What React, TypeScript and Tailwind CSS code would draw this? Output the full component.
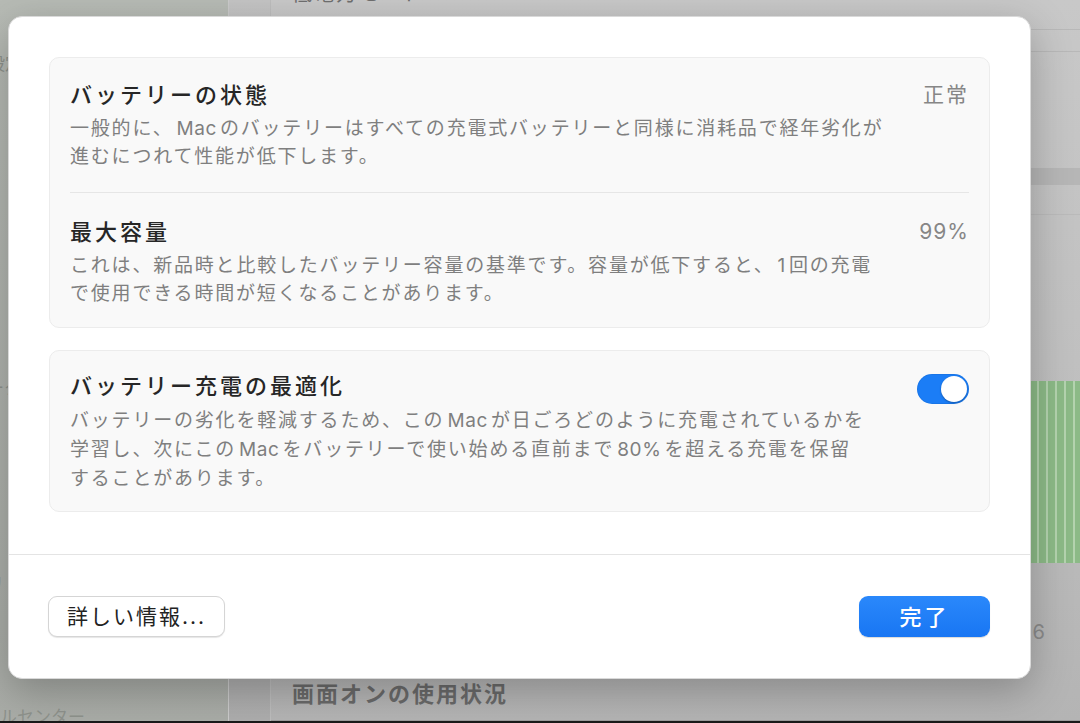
import React from 'react';

const Toggle: React.FC<{ on: boolean }> = ({ on }) => (
  <div
    className={
      on
        ? 'w-[52px] h-[30px] rounded-full bg-[#1b7df6] p-[2px] flex justify-end shrink-0 mt-[2px] shadow-[inset_0_0_0_1px_rgba(0,0,0,0.06)]'
        : 'w-[52px] h-[30px] rounded-full bg-[#e2e2e2] p-[2px] flex justify-start shrink-0 mt-[2px]'
    }
  >
    <div className="w-[26px] h-[26px] rounded-full bg-white shadow-[0_1px_2px_rgba(0,0,0,0.3)]" />
  </div>
);

const Title: React.FC<{ children: React.ReactNode }> = ({ children }) => (
  <div className="text-[22px] leading-[28px] tracking-[3px] font-medium text-[#262626] whitespace-nowrap">{children}</div>
);

const Desc: React.FC<{ lines: React.ReactNode[]; leading?: string }> = ({ lines, leading = 'leading-[28px]' }) => (
  <div className={`mt-[6px] text-[19px] ${leading} tracking-[1.8px] text-[#7f7f7f] whitespace-nowrap`}>
    {lines.map((l, i) => (
      <div key={i}>{l}</div>
    ))}
  </div>
);

// latin words inside japanese text: a little air round them, normal tracking
const W: React.FC<{ children: React.ReactNode }> = ({ children }) => (
  <span className="tracking-[0.6px] mx-[3px]">{children}</span>
);

const chartBars = Array.from({ length: 90 }, (_, i) => i);

export default function App() {
  return (
    <div className="relative w-[1080px] h-[723px] overflow-hidden flex flex-col bg-black font-[family-name:Inter,Noto_Sans_CJK_JP,sans-serif]">
      {/* dimmed settings window behind the sheet */}
      <div className="flex flex-1 min-h-0">
        <aside className="w-[228px] shrink-0 bg-gradient-to-b from-[#b7bbb5] to-[#a9aca7] flex flex-col overflow-hidden text-[17px] leading-[36px] text-[#8e928c]">
          <div className="h-[46px]" />
          <div className="-ml-[12px]">設定</div>
          <div className="-ml-[12px]">c</div>
          <div className="h-[36px]" />
          <div className="-ml-[40px]">ロン</div>
          <div className="h-[180px]" />
          <div className="-ml-[30px]">ワーク</div>
          <div className="h-[160px]" />
          <div className="-ml-[30px]">ドリ</div>
          <div className="mt-auto -mb-[14px] -ml-[85px] whitespace-nowrap">コントロールセンター</div>
        </aside>
        <div className="w-[42px] shrink-0 bg-gradient-to-b from-[#c4c4c4] to-[#adadad] border-l border-[#cbcbcb]" />
        <main className="flex-1 flex flex-col bg-gradient-to-b from-[#c8c8c8] via-[#c0c0c0] to-[#b4b4b4] border-l border-[#bdbdbd] overflow-hidden">
          <div className="h-[30px] shrink-0 border-b border-[#b8b8b8] overflow-hidden">
            <div className="-mt-[18px] pl-[21px] text-[20px] leading-[24px] tracking-[2px] text-[#6f6f6f]">低電力モード</div>
          </div>
          <div className="h-[22px] shrink-0 border-b border-[#b8b8b8]" />
          <div className="h-[116px] shrink-0" />
          <div className="h-[17px] shrink-0 bg-[#b6b6b6]" />
          <div className="h-[30px] shrink-0 border-b border-[#bababa]" />
          <div className="h-[166px] shrink-0" />
          <div className="h-[182px] shrink-0 pl-[21px]">
            <svg width="800" height="182" className="block">
              {chartBars.map((i) => (
                <rect key={i} x={i * 9} y={0} width={7} height={182} fill="#8cba87" />
              ))}
              {chartBars.map((i) => (
                <rect key={`l${i}`} x={i * 9 + 7} y={0} width={2} height={182} fill="#b4d3af" />
              ))}
            </svg>
          </div>
          <div className="h-[57px] shrink-0" />
          <div className="h-[24px] shrink-0 flex justify-end pr-[35px] text-[20px] leading-[24px] text-[#8b8b8b]">6</div>
          <div className="h-[35px] shrink-0" />
          <div className="h-[30px] shrink-0 pl-[21px] text-[22px] leading-[30px] tracking-[2px] font-bold text-[#6a6a6a]">画面オンの使用状況</div>
          <div className="flex-1 border-b border-[#9d9d9d]" />
        </main>
      </div>
      <div className="h-[2px] shrink-0 bg-[#1a1a1a]" />

      {/* battery health sheet */}
      <div className="absolute left-[8px] top-[16px] w-[1023px] h-[663px] bg-white rounded-[14px] border border-[#d9d9d9] shadow-[0_12px_40px_rgba(0,0,0,0.25)] flex flex-col">
        <div className="pl-[40px] pr-[40px] pt-[40px] flex flex-col gap-[22px]">
          <section className="rounded-[10px] bg-[#f9f9f9] border border-[#ececec]">
            <div className="px-[20px] pt-[23px] pb-[21px] flex justify-between">
              <div>
                <Title>バッテリーの状態</Title>
                <Desc
                  lines={[
                    <>一般的に、<W>Mac</W>のバッテリーはすべての充電式バッテリーと同様に消耗品で経年劣化が</>,
                    '進むにつれて性能が低下します。',
                  ]}
                />
              </div>
              <div className="text-[21px] leading-[28px] tracking-[2px] text-[#868686]">正常</div>
            </div>
            <div className="mx-[20px] h-px bg-[#e6e6e6]" />
            <div className="px-[20px] pt-[25px] pb-[19px] flex justify-between">
              <div>
                <Title>最大容量</Title>
                <Desc
                  lines={[
                    <>これは、新品時と比較したバッテリー容量の基準です。容量が低下すると、<W>1</W>回の充電</>,
                    'で使用できる時間が短くなることがあります。',
                  ]}
                />
              </div>
              <div className="text-[21px] leading-[28px] tracking-[1px] text-[#868686]">99%</div>
            </div>
          </section>

          <section className="rounded-[10px] bg-[#f9f9f9] border border-[#ececec] px-[20px] pt-[21px] pb-[18px] flex justify-between">
            <div>
              <Title>バッテリー充電の最適化</Title>
              <Desc
                leading="leading-[29px]"
                lines={[
                  <>バッテリーの劣化を軽減するため、この<W>Mac</W>が日ごろどのように充電されているかを</>,
                  <>学習し、次にこの<W>Mac</W>をバッテリーで使い始める直前まで<W>80%</W>を超える充電を保留</>,
                  'することがあります。',
                ]}
              />
            </div>
            <Toggle on />
          </section>
        </div>

        <div className="mt-[42px] h-px bg-[#e4e4e4]" />

        <div className="pl-[39px] pr-[40px] pt-[41px] flex justify-between items-center">
          <button className="h-[41px] px-[18px] rounded-[9px] bg-white border border-[#d5d5d5] shadow-[0_1px_1px_rgba(0,0,0,0.1)] text-[21px] leading-[28px] tracking-[2px] text-[#222222]">
            詳しい情報...
          </button>
          <button className="h-[41px] w-[131px] rounded-[9px] bg-gradient-to-b from-[#2a88fb] to-[#1876f3] shadow-[0_1px_1px_rgba(0,0,0,0.15)] text-[22px] leading-[28px] tracking-[3px] font-medium text-white">
            完了
          </button>
        </div>
      </div>
    </div>
  );
}
